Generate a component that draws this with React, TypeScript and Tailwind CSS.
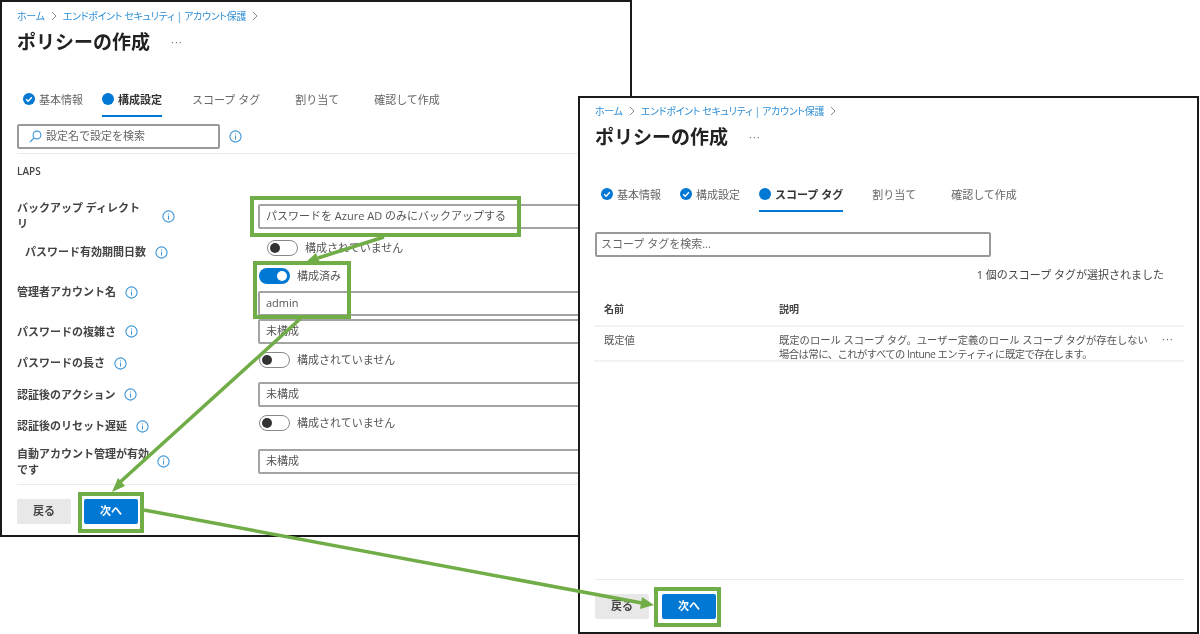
import React from "react";

const INPUT = "h-[25px] w-[362px] border-2 border-[#a3a3a3] rounded-[2px] flex items-center pl-[6px] text-[11px] text-[#555] bg-white";
const LABEL = "text-[11px] leading-[16px] font-semibold text-[#444] whitespace-nowrap";

function Info({ cls = "" }: { cls?: string }) {
  return (
    <svg width="13" height="13" viewBox="0 0 13 13" className={"shrink-0 " + cls}>
      <circle cx="6.5" cy="6.5" r="5.6" fill="none" stroke="#3d97d8" strokeWidth="1.1" />
      <rect x="6" y="5.6" width="1" height="4" fill="#3d97d8" />
      <rect x="6" y="3.5" width="1" height="1" fill="#3d97d8" />
    </svg>
  );
}

function Chevron() {
  return (
    <svg width="6" height="10" viewBox="0 0 6 10" className="shrink-0">
      <path d="M1 1l4 4-4 4" fill="none" stroke="#8a8886" strokeWidth="1" />
    </svg>
  );
}

function Check() {
  return (
    <svg width="12" height="12" viewBox="0 0 13 13" className="shrink-0 -mt-[4px]">
      <circle cx="6.5" cy="6.5" r="6.5" fill="#0078d4" />
      <path d="M3.4 6.8l2.2 2.2 4-4.4" fill="none" stroke="#fff" strokeWidth="1.5" />
    </svg>
  );
}

function Dot() {
  return <span className="shrink-0 -mt-[4px] w-[12px] h-[12px] rounded-full bg-[#0078d4]" />;
}

type TabDef = { t: string; state: "done" | "active" | "none"; ml: string };

function Tab({ t, state, ml }: TabDef) {
  return (
    <div className={"h-[29px] flex items-center gap-[4px] pb-[6px] pt-[4px] " + ml + (state === "active" ? " border-b-2 border-[#0078d4]" : " border-b-2 border-transparent")}>
      {state === "done" && <Check />}
      {state === "active" && <Dot />}
      <span className={"text-[11px] whitespace-nowrap " + (state === "active" ? "font-bold text-[#333]" : "text-[#666]")}>{t}</span>
    </div>
  );
}

function Header({ top, tabs }: { top: string; tabs: TabDef[] }) {
  return (
    <>
      <div className={"h-[14px] flex items-center gap-[6px] text-[10px] tracking-[-0.3px] text-[#2f8fd6] [font-feature-settings:'palt'] " + top}>
        <span>ホーム</span>
        <Chevron />
        <span>エンドポイント セキュリティ | アカウント保護</span>
        <Chevron />
      </div>
      <div className="mt-[6px] h-[26px] flex items-center">
        <h1 className="text-[19px] leading-[26px] font-bold text-[#222]">ポリシーの作成</h1>
        <span className="ml-[21px] text-[11px] text-[#777] tracking-[1px]">···</span>
      </div>
      <div className="mt-[33px] flex">
        {tabs.map((x) => (
          <Tab key={x.t} {...x} />
        ))}
      </div>
    </>
  );
}

function Footer({ pb }: { pb: string }) {
  return (
    <div className={"mt-auto border-t border-[#edebe9] pt-[14px] flex gap-[13px] " + pb}>
      <button className="w-[54px] h-[25px] bg-[#e8e8e8] rounded-[2px] text-[11px] font-bold text-[#444]">戻る</button>
      <button className="w-[54px] h-[25px] bg-[#0078d4] rounded-[2px] text-[11px] font-bold text-white">次へ</button>
    </div>
  );
}

function Toggle({ on = false, text, cls = "" }: { on?: boolean; text: string; cls?: string }) {
  return (
    <div className={"h-[20px] flex items-center gap-[7px] " + cls}>
      {on ? (
        <span className="w-[31px] h-[16px] rounded-full bg-[#0078d4] flex items-center justify-end pr-[3px]">
          <span className="w-[10px] h-[10px] rounded-full bg-white" />
        </span>
      ) : (
        <span className="w-[31px] h-[16px] rounded-full bg-white border border-[#888] flex items-center pl-[2px]">
          <span className="w-[10px] h-[10px] rounded-full bg-[#333]" />
        </span>
      )}
      <span className="text-[11px] text-[#555] whitespace-nowrap">{text}</span>
    </div>
  );
}

function Row({ cls, label, info, children, lcls = "" }: { cls: string; label: React.ReactNode; info: string; children: React.ReactNode; lcls?: string }) {
  return (
    <div className={"flex items-center " + cls}>
      <div className={"w-[241px] shrink-0 flex items-center " + lcls}>
        <div className={LABEL}>{label}</div>
        <Info cls={info} />
      </div>
      <div>{children}</div>
    </div>
  );
}

function LeftWindow() {
  return (
    <section className="absolute left-0 top-0 w-[632px] h-[537px] border-2 border-[#1a1a1a] bg-white pl-[15px] flex flex-col overflow-hidden">
      <Header
        top="mt-[7px]"
        tabs={[
          { t: "基本情報", state: "done", ml: "ml-[6px]" },
          { t: "構成設定", state: "active", ml: "ml-[19px]" },
          { t: "スコープ タグ", state: "none", ml: "ml-[30px]" },
          { t: "割り当て", state: "none", ml: "ml-[35px]" },
          { t: "確認して作成", state: "none", ml: "ml-[35px]" },
        ]}
      />
      <div className="mt-[7px] flex items-center">
        <div className="w-[203px] h-[25px] border-2 border-[#999] rounded-[2px] flex items-center pl-[10px] gap-[4px] text-[11px] text-[#666]">
          <svg width="13" height="13" viewBox="0 0 13 13" className="shrink-0">
            <circle cx="8" cy="5" r="3.9" fill="none" stroke="#3d97d8" strokeWidth="1.1" />
            <path d="M5.2 7.8L1 12" stroke="#3d97d8" strokeWidth="1.2" />
          </svg>
          <span>設定名で設定を検索</span>
        </div>
        <Info cls="ml-[9px]" />
      </div>
      <div className="mt-[4px] h-px bg-[#edebe9]" />
      <div className="mt-[9px] h-[16px] text-[10px] leading-[16px] font-semibold text-[#444]">LAPS</div>

      <Row cls="mt-[24px] h-[26px]" label={<>バックアップ ディレクト<br />リ</>} info="ml-[22px]">
        <div className={INPUT}>パスワードを Azure AD のみにバックアップする</div>
      </Row>
      <Row cls="mt-[9px] h-[20px]" label="パスワード有効期間日数" info="ml-[9px]" lcls="pl-[8px] mt-[8px]">
        <Toggle text="構成されていません" cls="ml-[9px]" />
      </Row>
      <div className="mt-[8px] flex">
        <div className="w-[241px] shrink-0 flex items-center mt-[18px] h-[16px]">
          <div className={LABEL}>管理者アカウント名</div>
          <Info cls="ml-[9px]" />
        </div>
        <div>
          <Toggle on text="構成済み" cls="ml-px" />
          <div className={INPUT + " mt-[5px]"}>admin</div>
        </div>
      </div>
      <Row cls="mt-[3px] h-[25px]" label="パスワードの複雑さ" info="ml-[9px]">
        <div className={INPUT}>未構成</div>
      </Row>
      <Row cls="mt-[6px] h-[20px]" label="パスワードの長さ" info="ml-[9px]" lcls="mt-[6px]">
        <Toggle text="構成されていません" cls="ml-px" />
      </Row>
      <Row cls="mt-[12px] h-[25px]" label="認証後のアクション" info="ml-[9px]">
        <div className={INPUT}>未構成</div>
      </Row>
      <Row cls="mt-[6px] h-[20px]" label="認証後のリセット遅延" info="ml-[9px]" lcls="mt-[6px]">
        <Toggle text="構成されていません" cls="ml-px" />
      </Row>
      <Row cls="mt-[16px] h-[25px]" label={<>自動アカウント管理が有効<br />です</>} info="ml-[8px]">
        <div className={INPUT}>未構成</div>
      </Row>
      <Footer pb="pb-[11px]" />
    </section>
  );
}

function RightWindow() {
  return (
    <section className="absolute left-[578px] top-[96px] w-[621px] h-[538px] border-2 border-[#1a1a1a] bg-white pl-[15px] flex flex-col overflow-hidden">
      <Header
        top="mt-[6px]"
        tabs={[
          { t: "基本情報", state: "done", ml: "ml-[6px]" },
          { t: "構成設定", state: "done", ml: "ml-[19px]" },
          { t: "スコープ タグ", state: "active", ml: "ml-[19px]" },
          { t: "割り当て", state: "none", ml: "ml-[29px]" },
          { t: "確認して作成", state: "none", ml: "ml-[35px]" },
        ]}
      />
      <div className="mt-[20px] w-[396px] h-[25px] border-2 border-[#999] rounded-[2px] flex items-center pl-[4px] text-[11px] text-[#666]">スコープ タグを検索...</div>
      <div className="mt-[10px] h-[16px] pr-[33px] text-right text-[11px] leading-[16px] text-[#444]">1 個のスコープ タグが選択されました</div>
      <div className="mt-[11px] -ml-px w-[590px]">
        <div className="h-[33px] flex items-center border-b-2 border-[#f3f2f1] text-[10px] font-semibold text-[#444]">
          <div className="w-[185px] pl-[10px]">名前</div>
          <div>説明</div>
        </div>
        <div className="h-[35px] pt-[6px] flex items-start border-b-2 border-[#f3f2f1] text-[10.3px] leading-[14px] text-[#555]">
          <div className="w-[185px] pl-[10px] shrink-0">既定値</div>
          <div className="w-[375px] shrink-0 whitespace-nowrap">
            既定のロール スコープ タグ。ユーザー定義のロール スコープ タグが存在しない
            <br />
            <span className="tracking-[-0.5px]">場合は常に、これがすべての Intune エンティティに既定で存在します。</span>
          </div>
          <div className="ml-[8px] text-[11px] leading-[12px] tracking-[1px] text-[#666]">···</div>
        </div>
      </div>
      <div className="mr-[13px] mt-auto">
        <Footer pb="pb-[13px]" />
      </div>
    </section>
  );
}

function Callout({ cls }: { cls: string }) {
  return <div className={"absolute border-[4px] border-[#70ad47] pointer-events-none " + cls} />;
}

export default function App() {
  return (
    <main className="relative w-[1200px] h-[634px] bg-white overflow-hidden blur-[0.35px] font-['Open_Sans','Noto_Sans_CJK_JP',sans-serif]">
      <LeftWindow />
      <RightWindow />
      <Callout cls="left-[250px] top-[196px] w-[271px] h-[41px]" />
      <Callout cls="left-[253px] top-[261px] w-[98px] h-[58px]" />
      <Callout cls="left-[78px] top-[492px] w-[66px] h-[41px]" />
      <Callout cls="left-[654px] top-[587px] w-[67px] h-[40px]" />
      <svg className="absolute left-0 top-0 pointer-events-none" width="1200" height="634" viewBox="0 0 1200 634">
        <g stroke="#70ad47" strokeWidth="3.5" fill="none">
          <path d="M384 237L318 258" />
          <path d="M300 319L118 484" />
          <path d="M144 510L642 603" />
        </g>
        <g fill="#70ad47">
          <polygon points="306,262 316,253 320,263" />
          <polygon points="112,492 118,478 125,486" />
          <polygon points="654,605 640,609 642,597" />
        </g>
      </svg>
    </main>
  );
}
